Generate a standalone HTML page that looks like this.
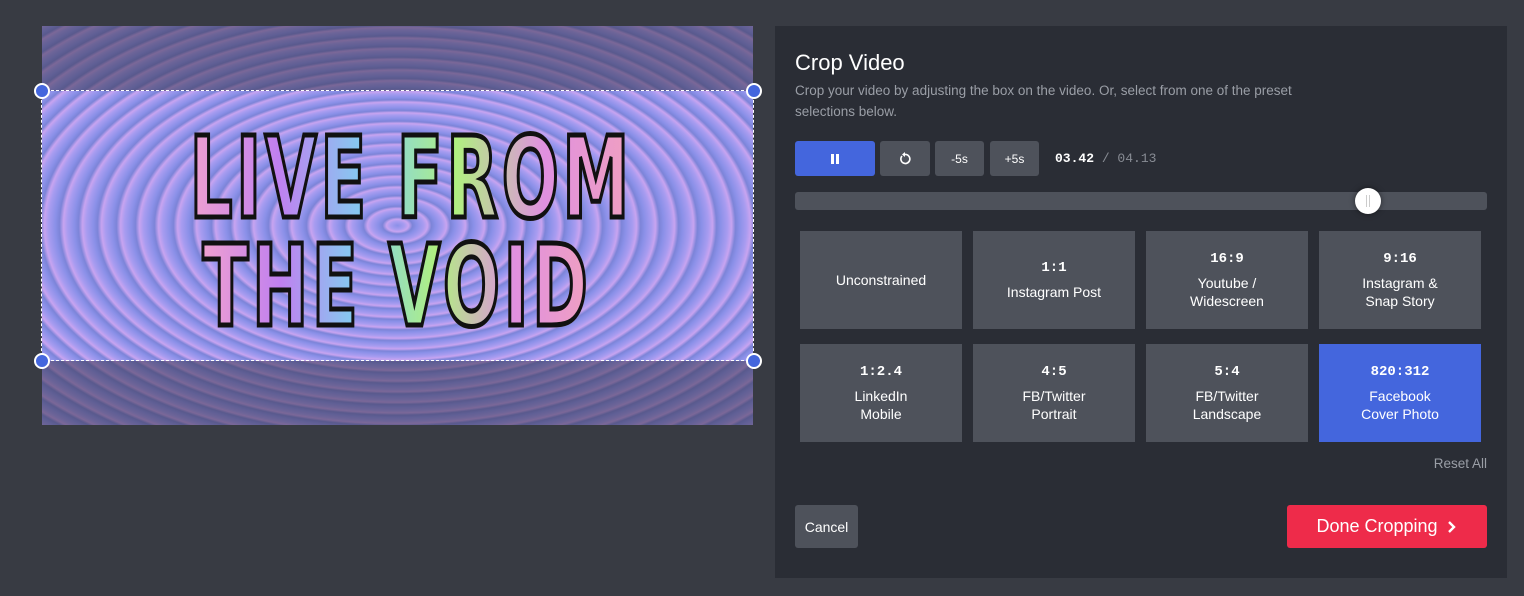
<!DOCTYPE html>
<html><head><meta charset="utf-8"><style>
*{margin:0;padding:0;box-sizing:border-box}
body{width:1524px;height:596px;background:#383b43;font-family:"Liberation Sans",sans-serif;position:relative;overflow:hidden}
.a{position:absolute}
.video{left:42px;top:26px;width:711px;height:399px;overflow:hidden;
background:repeating-radial-gradient(ellipse 100% 100% at 50% 50%,#8a90e8 0px,#a89cf0 7px,#c8a4f0 11px,#7c84d8 15px,#8a90e8 19px)}
.dim{background:rgba(60,55,80,.55)}
.tw{left:0;width:711px;text-align:center}
.t{display:inline-block;font-family:"DejaVu Sans","Liberation Sans",sans-serif;font-weight:bold;font-size:112px;line-height:112px;letter-spacing:6px;-webkit-text-stroke:5px #111;transform:scaleX(.6);transform-origin:center;
background:linear-gradient(90deg,#f0a0d0,#c080f0,#80d0f0,#b0f080,#e090e0,#f0a0c0);-webkit-background-clip:text;background-clip:text;-webkit-text-fill-color:transparent;paint-order:stroke fill;white-space:nowrap}
.h{width:16px;height:16px;border-radius:50%;background:#4466dd;border:2px solid #fff}
.panel{left:775px;top:26px;width:732px;height:552px;background:#2a2d35}
.btn{background:#4e525b;border-radius:3px;color:#fff;font-size:12px;display:flex;align-items:center;justify-content:center}
.cell{background:#4e525b;color:#fff;font-size:14px;text-align:center;display:flex;flex-direction:column;align-items:center;justify-content:center;width:162px;height:98px;line-height:18px}
.cell b{font-family:"Liberation Mono",monospace;font-size:14px;margin-bottom:6px}
</style></head><body>
<div class="a video">
 <div class="a dim" style="left:0;top:0;width:711px;height:65px"></div>
 <div class="a dim" style="left:0;top:335px;width:711px;height:64px"></div>
 <div class="a tw" style="top:97px"><span class="t">LIVE FROM</span></div>
 <div class="a tw" style="top:205px"><span class="t">THE VOID</span></div>
</div>
<div class="a" style="left:41px;top:90px;width:713px;height:271px;border:1px dashed #fff"></div>
<div class="a h" style="left:34px;top:83px"></div>
<div class="a h" style="left:746px;top:83px"></div>
<div class="a h" style="left:34px;top:353px"></div>
<div class="a h" style="left:746px;top:353px"></div>

<div class="a panel"></div>
<div class="a" style="left:795px;top:50px;color:#fff;font-size:22px">Crop Video</div>
<div class="a" style="left:795px;top:80px;width:550px;color:#9a9ea6;font-size:13.5px;line-height:21px">Crop your video by adjusting the box on the video. Or, select from one of the preset selections below.</div>
<div class="a btn" style="left:795px;top:141px;width:80px;height:35px;background:#4466dd">
 <svg width="10" height="10"><rect x="1" y="0" width="3" height="10" fill="#fff"/><rect x="6" y="0" width="3" height="10" fill="#fff"/></svg></div>
<div class="a btn" style="left:880px;top:141px;width:50px;height:35px">
 <svg width="14" height="14" viewBox="0 0 14 14"><path d="M4 4 A4.5 4.5 0 1 0 7 2.5" fill="none" stroke="#fff" stroke-width="1.6"/><path d="M7 0 L7 5 L4 2.5Z" fill="#fff"/></svg></div>
<div class="a btn" style="left:935px;top:141px;width:49px;height:35px">-5s</div>
<div class="a btn" style="left:990px;top:141px;width:49px;height:35px">+5s</div>
<div class="a" style="left:1055px;top:151px;font-family:'Liberation Mono',monospace;font-size:13px;color:#888c94"><b style="color:#fff">03.42</b> / 04.13</div>
<div class="a" style="left:795px;top:192px;width:692px;height:18px;background:#4e525b;border-radius:3px"></div>
<div class="a" style="left:1355px;top:188px;width:26px;height:26px;border-radius:50%;background:#fff;box-shadow:0 0 6px rgba(0,0,0,.5)"><div class="a" style="left:11px;top:7px;width:4px;height:12px;border-left:1px solid #ccc;border-right:1px solid #ccc"></div></div>

<div class="a cell" style="left:800px;top:231px">Unconstrained</div>
<div class="a cell" style="left:973px;top:231px"><b>1:1</b>Instagram Post</div>
<div class="a cell" style="left:1146px;top:231px"><b>16:9</b>Youtube /<br>Widescreen</div>
<div class="a cell" style="left:1319px;top:231px"><b>9:16</b>Instagram &amp;<br>Snap Story</div>
<div class="a cell" style="left:800px;top:344px"><b>1:2.4</b>LinkedIn<br>Mobile</div>
<div class="a cell" style="left:973px;top:344px"><b>4:5</b>FB/Twitter<br>Portrait</div>
<div class="a cell" style="left:1146px;top:344px"><b>5:4</b>FB/Twitter<br>Landscape</div>
<div class="a cell" style="left:1319px;top:344px;background:#4466dd"><b>820:312</b>Facebook<br>Cover Photo</div>
<div class="a" style="left:1400px;top:456px;width:87px;text-align:right;color:#9a9ea6;font-size:13.5px">Reset All</div>
<div class="a btn" style="left:795px;top:505px;width:63px;height:43px;font-size:14px">Cancel</div>
<div class="a btn" style="left:1287px;top:505px;width:200px;height:43px;background:#ee2b4a;font-size:18px">Done Cropping <svg width="12" height="14" style="margin-left:8px"><path d="M3 2 L8 7 L3 12" fill="none" stroke="#fff" stroke-width="2.4"/></svg></div>
</body></html>
